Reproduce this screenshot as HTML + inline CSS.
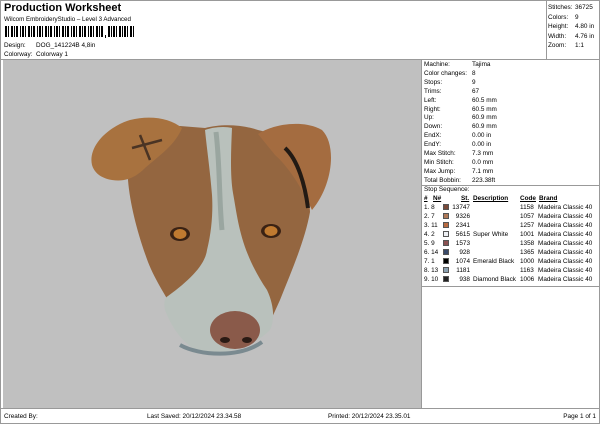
<!DOCTYPE html>
<html><head><style>
*{margin:0;padding:0;box-sizing:border-box}
body{width:600px;height:424px;background:#fff;font-family:"Liberation Sans",sans-serif;font-size:6.4px;color:#000;position:relative;overflow:hidden}
.a{position:absolute;white-space:nowrap}
.sw{position:absolute;width:6px;height:6px;border:1px solid #555}
</style></head><body>
<div class="a" style="left:0;top:0;width:600px;height:424px;border:1px solid #999"></div>
<div class="a" style="left:4px;top:2px;font-size:11px;font-weight:bold">Production Worksheet</div>
<div class="a" style="left:4px;top:16px;font-size:6.2px">Wilcom EmbroideryStudio – Level 3 Advanced</div>
<svg class="a" style="left:5px;top:26px" width="130" height="12">
<g fill="#000">
<rect x="0" y="0" width="2" height="11"/><rect x="3" y="0" width="1" height="11"/><rect x="6" y="0" width="2" height="11"/><rect x="9" y="0" width="1" height="11"/><rect x="11" y="0" width="2" height="11"/><rect x="15" y="0" width="1" height="11"/><rect x="17" y="0" width="2" height="11"/><rect x="20" y="0" width="1" height="11"/><rect x="23" y="0" width="2" height="11"/><rect x="26" y="0" width="1" height="11"/><rect x="28" y="0" width="2" height="11"/><rect x="32" y="0" width="1" height="11"/><rect x="34" y="0" width="2" height="11"/><rect x="37" y="0" width="1" height="11"/><rect x="40" y="0" width="2" height="11"/><rect x="43" y="0" width="1" height="11"/><rect x="45" y="0" width="2" height="11"/><rect x="49" y="0" width="1" height="11"/><rect x="51" y="0" width="2" height="11"/><rect x="54" y="0" width="1" height="11"/><rect x="57" y="0" width="2" height="11"/><rect x="60" y="0" width="1" height="11"/><rect x="62" y="0" width="2" height="11"/><rect x="66" y="0" width="1" height="11"/><rect x="68" y="0" width="2" height="11"/><rect x="71" y="0" width="1" height="11"/><rect x="74" y="0" width="2" height="11"/><rect x="77" y="0" width="1" height="11"/><rect x="79" y="0" width="2" height="11"/><rect x="83" y="0" width="1" height="11"/><rect x="85" y="0" width="2" height="11"/><rect x="88" y="0" width="1" height="11"/><rect x="91" y="0" width="2" height="11"/><rect x="94" y="0" width="1" height="11"/><rect x="96" y="0" width="2" height="11"/><rect x="100" y="9" width="1" height="3"/><rect x="103" y="0" width="2" height="11"/><rect x="106" y="0" width="1" height="11"/><rect x="108" y="0" width="2" height="11"/><rect x="111" y="0" width="1" height="11"/><rect x="114" y="0" width="2" height="11"/><rect x="117" y="0" width="1" height="11"/><rect x="119" y="0" width="2" height="11"/><rect x="122" y="0" width="1" height="11"/><rect x="125" y="0" width="2" height="11"/><rect x="128" y="0" width="1" height="11"/>
</g></svg>
<div class="a" style="left:4px;top:42px">Design:</div><div class="a" style="left:36px;top:42px">DOG_141224B 4,8in</div>
<div class="a" style="left:4px;top:51px">Colorway:</div><div class="a" style="left:36px;top:51px">Colorway 1</div>
<div class="a" style="left:546px;top:0;width:1px;height:59px;background:#999"></div>
<div class="a" style="left:548px;top:3px;line-height:9.5px">Stitches:<br>Colors:<br>Height:<br>Width:<br>Zoom:</div>
<div class="a" style="left:575px;top:3px;line-height:9.5px">36725<br>9<br>4.80 in<br>4.76 in<br>1:1</div>
<div class="a" style="left:0;top:59px;width:600px;height:1px;background:#999"></div>
<div class="a" style="left:3px;top:60px;width:418px;height:348px;background:#c0c0c0"></div>
<div class="a" style="left:421px;top:60px;width:1px;height:348px;background:#999"></div>
<div class="a" style="left:424px;top:61px;line-height:8.9px">Machine:<br>Color changes:<br>Stops:<br>Trims:<br>Left:<br>Right:<br>Up:<br>Down:<br>EndX:<br>EndY:<br>Max Stitch:<br>Min Stitch:<br>Max Jump:<br>Total Bobbin:</div>
<div class="a" style="left:472px;top:61px;line-height:8.9px">Tajima<br>8<br>9<br>67<br>60.5 mm<br>60.5 mm<br>60.9 mm<br>60.9 mm<br>0.00 in<br>0.00 in<br>7.3 mm<br>0.0 mm<br>7.1 mm<br>223.38ft</div>
<div class="a" style="left:422px;top:185px;width:178px;height:1px;background:#999"></div>
<div class="a" style="left:424px;top:186px">Stop Sequence:</div>
<div class="a" style="left:424px;top:195px;font-weight:bold;text-decoration:underline">#</div>
<div class="a" style="left:433px;top:195px;font-weight:bold;text-decoration:underline">N#</div>
<div class="a" style="left:461px;top:195px;font-weight:bold;text-decoration:underline">St.</div>
<div class="a" style="left:473px;top:195px;font-weight:bold;text-decoration:underline">Description</div>
<div class="a" style="left:520px;top:195px;font-weight:bold;text-decoration:underline">Code</div>
<div class="a" style="left:539px;top:195px;font-weight:bold;text-decoration:underline">Brand</div>
<div class="a" style="left:424px;top:203px;line-height:9px">1. 8<br>2. 7<br>3. 11<br>4. 2<br>5. 9<br>6. 14<br>7. 1<br>8. 13<br>9. 10</div>
<div class="sw" style="left:443px;top:204px;background:#7a4a3a"></div>
<div class="sw" style="left:443px;top:213px;background:#b07a58"></div>
<div class="sw" style="left:443px;top:222px;background:#b86a40"></div>
<div class="sw" style="left:443px;top:231px;background:#eef0f4"></div>
<div class="sw" style="left:443px;top:240px;background:#8a5050"></div>
<div class="sw" style="left:443px;top:249px;background:#3a4a6a"></div>
<div class="sw" style="left:443px;top:258px;background:#000"></div>
<div class="sw" style="left:443px;top:267px;background:#8aa0b0"></div>
<div class="sw" style="left:443px;top:276px;background:#222"></div>
<div class="a" style="left:451px;top:203px;line-height:9px;width:19px;text-align:right">13747<br>9326<br>2341<br>5615<br>1573<br>928<br>1074<br>1181<br>938</div>
<div class="a" style="left:473px;top:203px;line-height:9px"><br><br><br>Super White<br><br><br>Emerald Black<br><br>Diamond Black</div>
<div class="a" style="left:520px;top:203px;line-height:9px">1158<br>1057<br>1257<br>1001<br>1358<br>1365<br>1000<br>1163<br>1006</div>
<div class="a" style="left:538px;top:203px;line-height:9px">Madeira Classic 40<br>Madeira Classic 40<br>Madeira Classic 40<br>Madeira Classic 40<br>Madeira Classic 40<br>Madeira Classic 40<br>Madeira Classic 40<br>Madeira Classic 40<br>Madeira Classic 40</div>
<div class="a" style="left:422px;top:286px;width:178px;height:1px;background:#999"></div>
<div class="a" style="left:0;top:408px;width:600px;height:1px;background:#999"></div>
<div class="a" style="left:4px;top:413px">Created By:</div>
<div class="a" style="left:147px;top:413px">Last Saved: 20/12/2024 23.34.58</div>
<div class="a" style="left:328px;top:413px">Printed: 20/12/2024 23.35.01</div>
<div class="a" style="right:4px;top:413px">Page 1 of 1</div>
<svg class="a" style="left:3px;top:60px" width="418" height="348" viewBox="3 60 418 348">
<!-- head base brown -->
<path d="M128,180 C130,150 150,128 180,126 L205,128 C220,124 240,124 258,130 C280,135 300,150 308,180 L310,212 C305,240 292,270 280,300 L270,322 C250,348 220,352 200,345 L180,320 C168,300 155,280 148,262 C138,235 130,205 128,180Z" fill="#946640"/>
<!-- left ear -->
<path d="M92,165 C88,148 105,128 130,120 C150,115 170,118 182,128 C175,145 160,155 145,168 C135,178 125,182 112,180 C100,178 94,172 92,165Z" fill="#a8723f"/>
<path d="M140,135 L150,160 M132,148 L162,140" stroke="#4a3424" stroke-width="2.5"/>
<!-- right ear -->
<path d="M258,134 C275,123 305,120 322,130 C337,145 333,185 312,210 C305,195 292,170 275,155Z" fill="#a46c40"/>
<path d="M285,148 C298,160 305,185 308,208" stroke="#221a14" stroke-width="4" fill="none"/>
<!-- white blaze and muzzle -->
<path d="M205,130 C213,127 225,126 232,128 C231,150 230,175 233,193 C238,220 240,250 267,290 C274,305 275,320 270,330 C250,350 220,356 196,350 C182,342 172,328 165,310 C163,300 166,297 168,296 C190,280 205,265 207,250 C212,230 213,210 212,195 C210,170 207,150 205,130Z" fill="#b9c1bc"/>
<path d="M216,132 C220,165 219,200 222,230" stroke="#9aa6a0" stroke-width="5" fill="none"/>
<path d="M180,345 C200,356 240,358 262,342" stroke="#7a8a90" stroke-width="4" fill="none"/>
<!-- nose -->
<ellipse cx="235" cy="330" rx="25" ry="19" fill="#8a5a4a"/>
<ellipse cx="225" cy="340" rx="5" ry="3" fill="#2a1a14"/>
<ellipse cx="247" cy="340" rx="5" ry="3" fill="#2a1a14"/>
<!-- eyes -->
<ellipse cx="180" cy="234" rx="10" ry="7" fill="#3a2214"/><ellipse cx="180" cy="234" rx="6.5" ry="5" fill="#c07a30"/>
<ellipse cx="271" cy="231" rx="10" ry="7" fill="#3a2214"/><ellipse cx="271" cy="231" rx="6.5" ry="5" fill="#c07a30"/>
</svg>
</body></html>
